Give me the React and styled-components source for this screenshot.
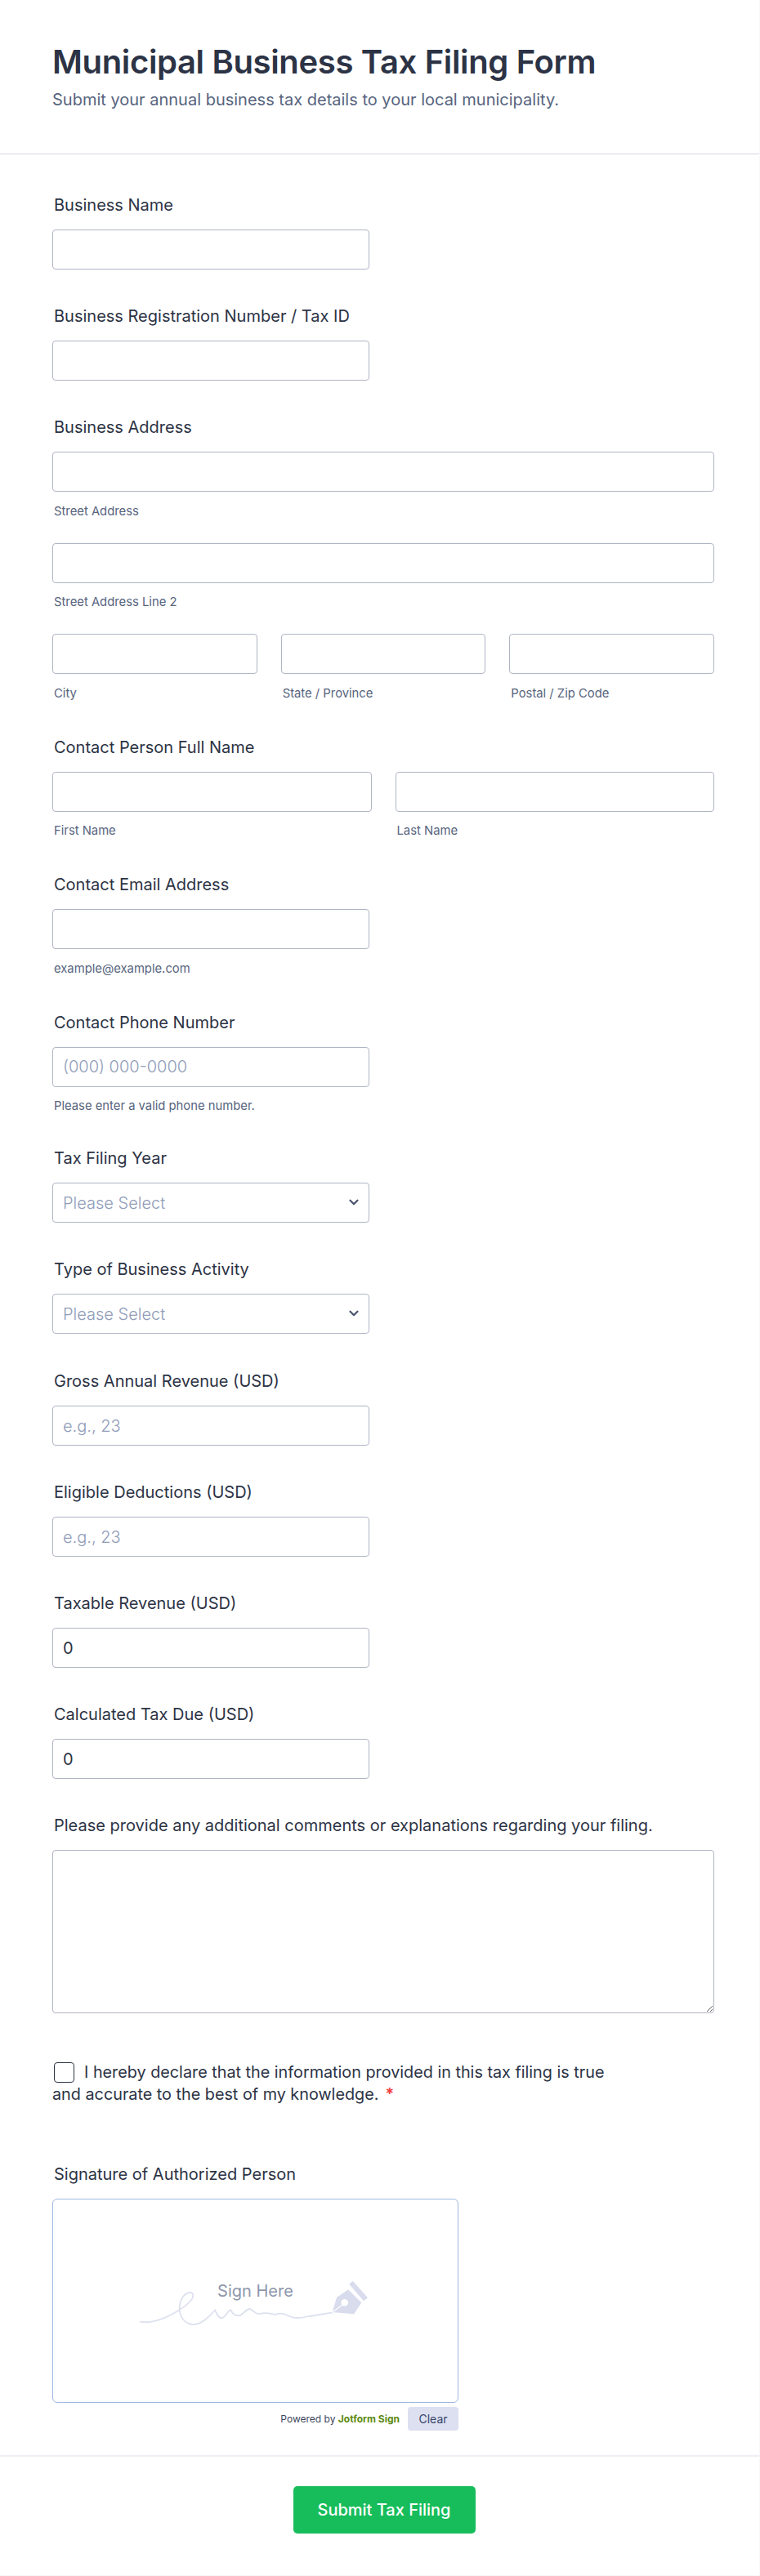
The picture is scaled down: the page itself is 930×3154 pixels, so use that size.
import styled, { createGlobalStyle } from "styled-components";
import { ChevronDown } from "lucide-react";

const GlobalStyle = createGlobalStyle`
  html, body {
    margin: 0;
    padding: 0;
    background: #fff;
  }
  * {
    box-sizing: border-box;
  }
  body {
    font-family: Inter, "Liberation Sans", sans-serif;
    color: #2c3345;
  }
`;

const Page = styled.div`
  width: 930px;
  height: 3154px;
  border-right: 1px solid #f8f8fa;
  border-bottom: 1px solid #f8f8fa;
`;

const Header = styled.header`
  height: 189px;
  padding: 50px 64px 0;
  border-bottom: 1px solid #d5d8e2;
`;

const Title = styled.h1`
  margin: 0;
  font-size: 40px;
  line-height: 52px;
  font-weight: 600;
  letter-spacing: -0.35px;
  color: #2c3345;
`;

const Subtitle = styled.p`
  margin: 9px 0 0;
  font-size: 20px;
  line-height: 22px;
  color: #57647e;
`;

const Form = styled.form`
  padding: 49px 55px 0 64px;
`;

const Field = styled.div`
  margin-bottom: ${(p) => p.$gap ?? 44}px;
`;

const Label = styled.label`
  display: block;
  margin: 0 0 17px 2px;
  font-size: 20px;
  line-height: 26px;
  font-weight: 400;
  color: #2c3345;
`;

const TextInput = styled.input`
  display: block;
  width: ${(p) => p.$width || "100%"};
  height: 49px;
  padding: 0 12px;
  font: 400 20px Inter, sans-serif;
  color: #2c3345;
  background: #fff;
  border: 1px solid #b0b5c5;
  border-radius: 4px;
  outline: none;

  &::placeholder {
    font-weight: 300;
    color: #8f9cb8;
    opacity: 1;
  }
`;

const SubLabel = styled.span`
  display: block;
  margin: 14.5px 0 ${(p) => p.$after ?? 0}px 2px;
  font-size: 14.8px;
  line-height: 18px;
  color: #57647e;
`;

const Grid = styled.div`
  display: grid;
  grid-template-columns: repeat(${(p) => p.$cols}, 1fr);
  column-gap: 29px;
`;

const SelectWrap = styled.div`
  position: relative;
  width: 388px;
  height: 49px;

  svg {
    position: absolute;
    top: 15px;
    right: 10px;
    color: #4b556e;
    pointer-events: none;
  }
`;

const Select = styled.select`
  appearance: none;
  width: 100%;
  height: 100%;
  padding: 0 12px;
  font: 300 20px Inter, sans-serif;
  color: #8f9cb8;
  background: #fff;
  border: 1px solid #b0b5c5;
  border-radius: 4px;
  outline: none;
`;

const TextArea = styled.textarea`
  display: block;
  width: 100%;
  height: 200px;
  background: #fff;
  border: 1px solid #b0b5c5;
  border-radius: 4px;
  outline: none;
`;

const Consent = styled.div`
  width: 690px;
  margin: 59px 0 71px;
  font-size: 19.8px;
  font-weight: 400;
  line-height: 27px;
  color: #2c3345;
`;

const Checkbox = styled.input`
  appearance: none;
  display: inline-block;
  vertical-align: -6px;
  width: 25px;
  height: 25px;
  margin: 0 12px 0 2px;
  background: #fff;
  border: 1.5px solid #2c3345;
  border-radius: 4px;
`;

const Required = styled.span`
  margin-left: 8px;
  font-weight: 600;
  color: #f23a3c;
`;

const SignPad = styled.div`
  position: relative;
  display: flex;
  justify-content: center;
  width: 497px;
  height: 250px;
  padding-top: 99px;
  background: #fff;
  border: 1px solid #9fb8e0;
  border-radius: 6px;
`;

const SignHint = styled.span`
  position: relative;
  font-size: 20px;
  line-height: 26px;
  color: #8d96ac;
`;

const SignArt = styled.svg`
  position: absolute;
  left: 85px;
  top: 67px;
`;

const SignFooter = styled.div`
  display: flex;
  align-items: center;
  justify-content: flex-end;
  gap: 10px;
  width: 497px;
  margin-top: 5px;
`;

const PoweredBy = styled.span`
  font-size: 12px;
  color: #3d465c;

  b {
    font-weight: 700;
    color: #5c8a12;
  }
`;

const ClearButton = styled.button`
  width: 62px;
  height: 29px;
  padding: 0;
  font: 400 14px Inter, sans-serif;
  color: #37436b;
  background: #dce0f0;
  border: none;
  border-radius: 4px;
`;

const Footer = styled.footer`
  display: flex;
  justify-content: center;
  padding: 36px 0 0 11px;
  margin-top: 30px;
  border-top: 2px solid #eef0f5;
`;

const SubmitButton = styled.button`
  width: 223px;
  height: 58px;
  font: 450 20px Inter, sans-serif;
  color: #fff;
  background: #18bd5b;
  border: none;
  border-radius: 5px;
`;

const SignatureArt = () => (
  <SignArt width="325" height="116" viewBox="0 0 325 116" fill="none">
    <path
      d="M21.7 82.7C35 85 50 80 66.7 70C78 63 88 55 86 49C84 44 74 48 71 58C67 70 72 84 85 86C95 87 105 78 113 68.5C115 72 117 79 122 78C126 77 128 70 132 68C134 72 138 76 143 75C148 74 150 68 155 67C160 67 161 74 168 73C175 71 180 72 187 74C192 72 198 72 204 76C210 79 220 78 228 76L256 71.7"
      stroke="#dde1ee"
      strokeWidth="1.8"
      strokeLinecap="round"
    />
    <path d="M281.7 32.7L300 53.3L295 57.3L277.3 36.7Z" fill="#d8dced" />
    <path d="M256.7 71L262 53L276 43.3L292.3 59.3L283.3 73.3Z" fill="#d8dced" />
    <circle cx="271.7" cy="59.3" r="4.3" fill="#fff" />
    <path d="M257 71L269 62" stroke="#fff" strokeWidth="1.2" />
  </SignArt>
);

const Input = ({ label, placeholder, value, sub, gap }) => (
  <Field $gap={gap}>
    <Label>{label}</Label>
    <TextInput $width="388px" placeholder={placeholder} defaultValue={value} />
    {sub && <SubLabel>{sub}</SubLabel>}
  </Field>
);

const Dropdown = ({ label, gap }) => (
  <Field $gap={gap}>
    <Label>{label}</Label>
    <SelectWrap>
      <Select defaultValue="">
        <option value="">Please Select</option>
      </Select>
      <ChevronDown size={18} strokeWidth={3} />
    </SelectWrap>
  </Field>
);

const App = () => (
  <Page>
    <GlobalStyle />
    <Header>
      <Title>Municipal Business Tax Filing Form</Title>
      <Subtitle>Submit your annual business tax details to your local municipality.</Subtitle>
    </Header>
    <Form>
      <Input label="Business Name" />
      <Input label="Business Registration Number / Tax ID" />
      <Field>
        <Label>Business Address</Label>
        <TextInput />
        <SubLabel $after={30}>Street Address</SubLabel>
        <TextInput />
        <SubLabel $after={30}>Street Address Line 2</SubLabel>
        <Grid $cols={3}>
          <div>
            <TextInput />
            <SubLabel>City</SubLabel>
          </div>
          <div>
            <TextInput />
            <SubLabel>State / Province</SubLabel>
          </div>
          <div>
            <TextInput />
            <SubLabel>Postal / Zip Code</SubLabel>
          </div>
        </Grid>
      </Field>
      <Field>
        <Label>Contact Person Full Name</Label>
        <Grid $cols={2}>
          <div>
            <TextInput />
            <SubLabel>First Name</SubLabel>
          </div>
          <div>
            <TextInput />
            <SubLabel>Last Name</SubLabel>
          </div>
        </Grid>
      </Field>
      <Input label="Contact Email Address" sub="example@example.com" />
      <Input label="Contact Phone Number" placeholder="(000) 000-0000" sub="Please enter a valid phone number." gap={42} />
      <Dropdown label="Tax Filing Year" />
      <Dropdown label="Type of Business Activity" gap={45} />
      <Input label="Gross Annual Revenue (USD)" placeholder="e.g., 23" />
      <Input label="Eligible Deductions (USD)" placeholder="e.g., 23" />
      <Input label="Taxable Revenue (USD)" value="0" />
      <Input label="Calculated Tax Due (USD)" value="0" />
      <Field $gap={0}>
        <Label>Please provide any additional comments or explanations regarding your filing.</Label>
        <TextArea />
      </Field>
      <Consent>
        <Checkbox type="checkbox" />
        I hereby declare that the information provided in this tax filing is true and accurate to the best of my knowledge.
        <Required>*</Required>
      </Consent>
      <Label>Signature of Authorized Person</Label>
      <SignPad>
        <SignatureArt />
        <SignHint>Sign Here</SignHint>
      </SignPad>
      <SignFooter>
        <PoweredBy>
          Powered by <b>Jotform Sign</b>
        </PoweredBy>
        <ClearButton type="button">Clear</ClearButton>
      </SignFooter>
    </Form>
    <Footer>
      <SubmitButton type="button">Submit Tax Filing</SubmitButton>
    </Footer>
  </Page>
);

export default App;
